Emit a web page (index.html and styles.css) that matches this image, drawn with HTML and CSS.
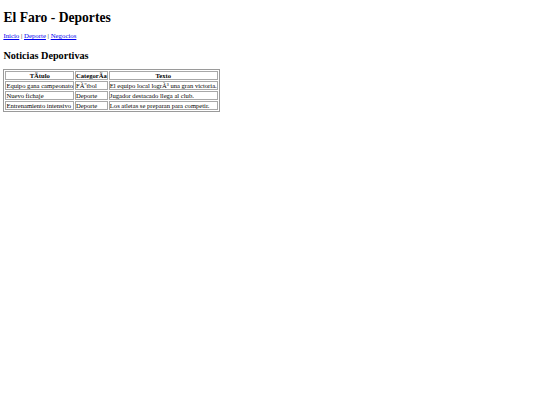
FILE: index.html
```html
<!DOCTYPE html>
<html lang="es">
<head>
<meta charset="utf-8">
<title>El Faro - Deportes</title>
<link rel="stylesheet" href="styles.css">
</head>
<body>
<h1 class="title">El Faro - Deportes</h1>
<nav class="nav"><a href="#">Inicio</a> | <a href="#">Deporte</a> | <a href="#">Negocios</a></nav>
<h2 class="section">Noticias Deportivas</h2>
<table class="news">
<tr><th>TÃ&shy;tulo</th><th>CategorÃ&shy;a</th><th>Texto</th></tr>
<tr><td>Equipo gana campeonato</td><td>FÃºtbol</td><td>El equipo local logrÃ³ una gran victoria.</td></tr>
<tr><td>Nuevo fichaje</td><td>Deporte</td><td>Jugador destacado llega al club.</td></tr>
<tr><td>Entrenamiento intensivo</td><td>Deporte</td><td>Los atletas se preparan para competir.</td></tr>
</table>
</body>
</html>
```
FILE: styles.css
```css
body {
  margin: 3.4px;
  font-family: "Liberation Serif", "Times New Roman", serif;
  font-size: 6.8px;
  color: #000;
}
.title {
  font-size: 13.6px;
  line-height: 16px;
  margin: 7px 0 6px;
}
.nav {
  line-height: 8px;
}
.nav a {
  color: #0000ee;
}
.section {
  font-size: 10.2px;
  line-height: 12px;
  margin: 10px 0 7px;
}
.news {
  border: 1px solid #9a9a9a;
  border-spacing: 1px;
  font-size: 6.6px;
  line-height: 7px;
}
.news th,
.news td {
  border: 1px solid #a8a8a8;
  padding: 0;
  text-align: left;
  white-space: nowrap;
}
.news th {
  text-align: center;
  font-weight: bold;
}
```
